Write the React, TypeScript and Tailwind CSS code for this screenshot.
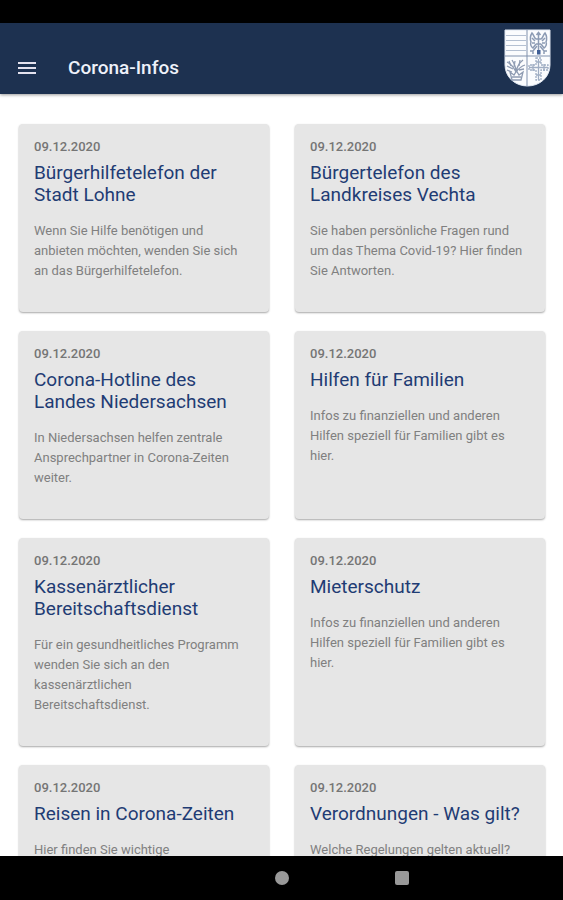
// Corona-Infos: the app's news overview, a two-column list of cards between
// the device's status bar and navigation bar.

import { MdMenu } from "react-icons/md";

type Info = { id: string; date: string; title: string; text: string };

const infos: Info[] = [
  {
    id: "buergerhilfe",
    date: "09.12.2020",
    title: "Bürgerhilfetelefon der Stadt Lohne",
    text: "Wenn Sie Hilfe benötigen und anbieten möchten, wenden Sie sich an das Bürgerhilfetelefon.",
  },
  {
    id: "buergertelefon",
    date: "09.12.2020",
    title: "Bürgertelefon des Landkreises Vechta",
    text: "Sie haben persönliche Fragen rund um das Thema Covid-19? Hier finden Sie Antworten.",
  },
  {
    id: "hotline",
    date: "09.12.2020",
    title: "Corona-Hotline des Landes Niedersachsen",
    text: "In Niedersachsen helfen zentrale Ansprechpartner in Corona-Zeiten weiter.",
  },
  {
    id: "familien",
    date: "09.12.2020",
    title: "Hilfen für Familien",
    text: "Infos zu finanziellen und anderen Hilfen speziell für Familien gibt es hier.",
  },
  {
    id: "bereitschaftsdienst",
    date: "09.12.2020",
    title: "Kassenärztlicher Bereitschaftsdienst",
    text: "Für ein gesundheitliches Programm wenden Sie sich an den kassenärztlichen Bereitschaftsdienst.",
  },
  {
    id: "mieterschutz",
    date: "09.12.2020",
    title: "Mieterschutz",
    text: "Infos zu finanziellen und anderen Hilfen speziell für Familien gibt es hier.",
  },
  {
    id: "reisen",
    date: "09.12.2020",
    title: "Reisen in Corona-Zeiten",
    text: "Hier finden Sie wichtige",
  },
  {
    id: "verordnungen",
    date: "09.12.2020",
    title: "Verordnungen - Was gilt?",
    text: "Welche Regelungen gelten aktuell?",
  },
];

// Coat of arms: bars, eagle, crown with sprigs and cross, one per quarter.
function Crest() {
  return (
    <svg viewBox="0 0 48 58" className="h-[58px] w-12" role="img" aria-label="Wappen">
      <path
        d="M2 1H47V36C47 48 37 57 24.5 57S2 48 2 36Z"
        fill="#fbfcfe"
        stroke="#dfe6f0"
        strokeWidth="1"
      />
      <g fill="none">
        <path d="M24 1V57M2 27H47" stroke="#8091ad" strokeWidth="1" />
        <path d="M3 6.5H23M3 11.5H23M3 16.5H23M3 21.5H23" stroke="#b4c0d2" strokeWidth="1" />
        {/* eagle */}
        <g stroke="#8c9bb4" strokeWidth="1.5">
          <path d="M35.5 5V24M33.5 6L35.5 3.5L37.5 6" />
          <path d="M33 10C31 9 31 6 29 4C27 7 27 10 28 13C27 15 28 18 30 19L33 15" />
          <path d="M38 10C40 9 40 6 42 4C44 7 44 10 43 13C44 15 43 18 41 19L38 15" />
          <path d="M33 10H38M33 15H38M29 9L32 12M42 9L39 12M29 14L32 14M42 14L39 14" />
          <path d="M34 17L30 22L27 22M37 17L41 22L44 22M30 22L30 25M41 22L41 25" />
        </g>
        <path d="M34 21H37.5V25.5H34Z" fill="#3f5f96" />
        {/* sprigs above the crown */}
        <g stroke="#8e9bb2" strokeWidth="1.3">
          <path d="M13 43C11 39 8 35 4 33M13 43C13 38 11 34 9 31M13 43C14 38 16 34 20 31M13 43C16 39 19 37 22 36" />
          <path d="M4 37L10 40M6 32L8 37M12 32L11 38M17 31L16 37M21 40L16 41M4 41L9 43" />
          <path d="M7 43L9 51H18L20 43L16 46L13.5 42L11 46ZM9 48H18" />
        </g>
        {/* cross */}
        <g stroke="#9fadc3" strokeWidth="1.3">
          <path d="M33 29H38V36H45V41H38V51H33V41H26V36H33Z" strokeDasharray="2 1" />
          <path d="M35.5 30V51M26 38.5H45M33 33H38M33 46H38M30 35V42M41 35V42" />
        </g>
      </g>
    </svg>
  );
}

function InfoCard({ info }: { info: Info }) {
  return (
    <article className="rounded bg-[#e6e6e6] pt-[15px] pr-5 pb-[31px] pl-[15px] shadow-[0_1px_2px_rgba(0,0,0,0.35)]">
      <time dateTime="2020-12-09" className="block text-[13px] leading-4 font-medium text-[#757575]">
        {info.date}
      </time>
      <h2 className="mt-[7px] text-[19px] leading-[22px] text-[#1f3c74]">{info.title}</h2>
      <p className="mt-[15px] text-[13px] leading-5 text-[#808080]">{info.text}</p>
    </article>
  );
}

export default function App() {
  return (
    <div className="flex h-screen flex-col bg-white font-[Roboto,sans-serif]">
      <div className="h-[23px] shrink-0 bg-black" />

      <header className="z-10 flex shrink-0 items-end bg-[#1d3150] pt-1.5 pr-3 pl-[15px] shadow-[0_1px_3px_rgba(0,0,0,0.4)]">
        <button type="button" aria-label="Menü" className="mb-3.5 text-[#e4e2ee]">
          <MdMenu size={24} />
        </button>
        <h1 className="mb-3.5 ml-[29px] flex-1 text-[19px] leading-6 font-medium text-[#eef1fa]">Corona-Infos</h1>
        <div className="pb-[7px]">
          <Crest />
        </div>
      </header>

      <main className="min-h-0 flex-1 overflow-hidden pt-[30px] pr-[18px] pl-[19px]">
        <div className="grid grid-cols-2 gap-x-[26px] gap-y-[19px]">
          {infos.map((info) => (
            <InfoCard key={info.id} info={info} />
          ))}
        </div>
      </main>

      <nav
        aria-label="System"
        className="z-10 grid h-11 shrink-0 grid-cols-[1fr_auto_1fr] items-center bg-black"
      >
        <span />
        <button type="button" aria-label="Startseite" className="size-3.5 rounded-full bg-[#999999]" />
        <button type="button" aria-label="Übersicht" className="ml-[106px] size-3.5 rounded-xs bg-[#999999]" />
      </nav>
    </div>
  );
}
